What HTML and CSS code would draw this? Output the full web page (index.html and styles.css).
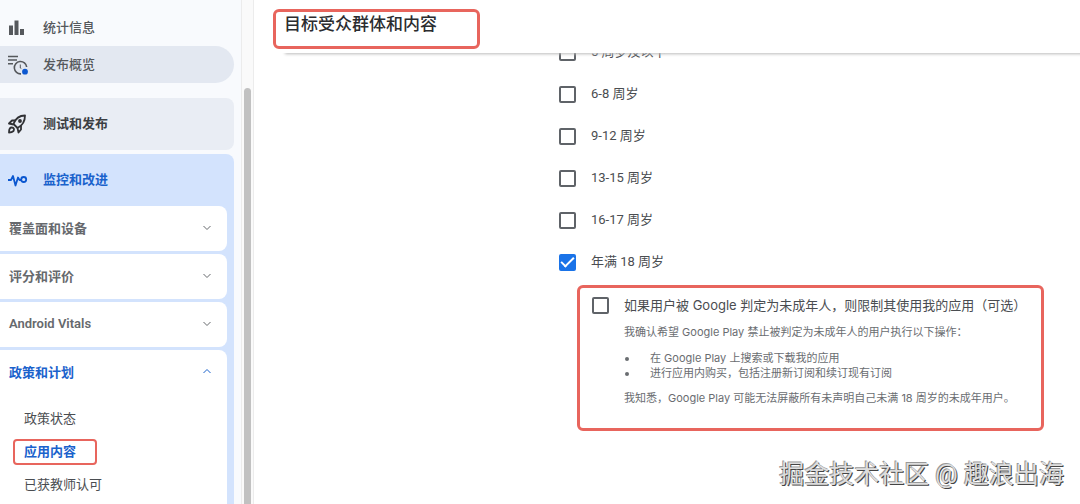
FILE: index.html
```html
<!DOCTYPE html>
<html lang="zh-CN">
<head>
<meta charset="utf-8">
<meta name="viewport" content="width=device-width, initial-scale=1">
<title>目标受众群体和内容</title>
<link rel="stylesheet" href="styles.css">
</head>
<body>
<div class="app">
  <aside class="sidebar">
    <nav class="nav">
      <a class="nav-item" href="#">
        <svg class="icon" viewBox="0 0 20 20"><path fill="#55585c" d="M1 7.500h4V17H1zM6.500 2.500h4V17h-4zM12 11h4v6h-4z"/></svg>
        <span>统计信息</span>
      </a>
      <a class="nav-item nav-item-current" href="#">
        <svg class="icon" viewBox="0 0 20 20" fill="none" stroke="#55585c" stroke-width="1.600"><path d="M0 1.500h10M0 5h9M0 8.800h5"/><path d="M18.700 12A6.200 6.200 0 1 0 13 18.900"/><path d="M12.300 9.500v3.500l1 .5" stroke-width="1"/><circle cx="17" cy="16.700" r="2.900" fill="#0b57d0" stroke="none"/></svg>
        <span>发布概览</span>
      </a>
      <a class="nav-section" href="#">
        <svg class="icon" viewBox="0 0 20 20" fill="none" stroke="#303134" stroke-width="1.800" stroke-linejoin="round"><path d="M5.500 10C7.500 4.500 11.500 1.500 17 1.500C17 7.500 14.500 11.500 9.500 14Z"/><path d="M7.500 6.500L4 6.500L1 9.500L5.500 10.500M13 12V15.500L10.500 18.500L9.500 14"/><circle cx="12" cy="7" r="1"/><path d="M1 18.500C1 15.500 1.500 13.500 3.800 13.500C6 13.500 6.500 15.500 5.500 17C4.500 18 3 18.500 1 18.500Z"/></svg>
        <span>测试和发布</span>
      </a>
      <div class="group">
        <a class="nav-section nav-section-active" href="#">
          <svg class="icon" viewBox="0 0 20 20" fill="none" stroke="#0b57d0" stroke-width="1.800" stroke-linecap="round" stroke-linejoin="round"><path d="M0 10h3l2-4l2.500 9.500L10 7.500l1.500 2.500h1.500"/><circle cx="15.700" cy="9.500" r="2.500"/></svg>
          <span>监控和改进</span>
        </a>
        <button class="card" type="button"><span>覆盖面和设备</span><svg class="chevron" viewBox="0 0 10 10"><path d="M1.500 3L5 6.500L8.500 3"/></svg></button>
        <button class="card" type="button"><span>评分和评价</span><svg class="chevron" viewBox="0 0 10 10"><path d="M1.500 3L5 6.500L8.500 3"/></svg></button>
        <button class="card" type="button"><span>Android Vitals</span><svg class="chevron" viewBox="0 0 10 10"><path d="M1.500 3L5 6.500L8.500 3"/></svg></button>
        <div class="open-card">
          <button class="card card-open" type="button"><span>政策和计划</span><svg class="chevron" viewBox="0 0 10 10"><path d="M1.500 6L5 2.500L8.500 6"/></svg></button>
          <div class="sub-list">
            <a class="sub-item" href="#">政策状态</a>
            <a class="sub-item sub-item-marked" href="#">应用内容</a>
            <a class="sub-item" href="#">已获教师认可</a>
          </div>
        </div>
      </div>
    </nav>
    <div class="scroll-track"><div class="scroll-thumb"></div></div>
  </aside>
  <main class="main">
    <header class="header"><h1 class="title">目标受众群体和内容</h1></header>
    <div class="content">
      <div class="ages">
        <label class="age"><input class="check" type="checkbox"><span>5 周岁及以下</span></label>
        <label class="age"><input class="check" type="checkbox"><span>6-8 周岁</span></label>
        <label class="age"><input class="check" type="checkbox"><span>9-12 周岁</span></label>
        <label class="age"><input class="check" type="checkbox"><span>13-15 周岁</span></label>
        <label class="age"><input class="check" type="checkbox"><span>16-17 周岁</span></label>
        <label class="age"><input class="check" type="checkbox" checked><span>年满 18 周岁</span></label>
      </div>
      <section class="restrict">
        <input class="check" type="checkbox" id="restrict">
        <div class="restrict-body">
          <label class="restrict-label" for="restrict">如果用户被 Google 判定为未成年人，则限制其使用我的应用（可选）</label>
          <p class="note">我确认希望 Google Play 禁止被判定为未成年人的用户执行以下操作：</p>
          <ul class="note-list">
            <li>在 Google Play 上搜索或下载我的应用</li>
            <li>进行应用内购买，包括注册新订阅和续订现有订阅</li>
          </ul>
          <p class="note">我知悉，Google Play 可能无法屏蔽所有未声明自己未满 18 周岁的未成年用户。</p>
        </div>
      </section>
    </div>
  </main>
  <div class="watermark">掘金技术社区 @ 趣浪出海</div>
</div>
</body>
</html>
```
FILE: styles.css
```css
* { box-sizing: border-box; }

body {
  margin: 0;
  font-family: Roboto, "Noto Sans CJK SC", sans-serif;
  font-size: 13px;
  line-height: 20px;
  color: #4a4d51;
  background: #fff;
}

a { color: inherit; text-decoration: none; }

.app {
  position: relative;
  display: flex;
  height: 100vh;
  overflow: hidden;
}

.sidebar {
  display: flex;
  flex: none;
  width: 254px;
  background: #f8fafd;
}

.nav {
  flex: 1;
  padding: 9px 7px 0 0;
}

.nav-item,
.nav-section {
  display: flex;
  align-items: center;
  gap: 15px;
  padding-left: 8px;
}

.nav-item {
  height: 37px;
  color: #55585c;
  font-weight: 500;
}

.nav-item-current {
  border-radius: 0 19px 19px 0;
  background: #e3e8f1;
}

.nav-section {
  height: 52px;
  margin-top: 15px;
  border-radius: 0 8px 8px 0;
  background: #e9edf4;
  color: #3c3f43;
  font-weight: 700;
}

.nav-section-active {
  margin-top: 0;
  background: none;
  color: #1a62cc;
}

.icon { width: 20px; height: 20px; }

.group {
  margin-top: 4px;
  padding-right: 7px;
  border-radius: 0 8px 0 0;
  background: #d3e3fd;
}

.card {
  display: flex;
  align-items: center;
  justify-content: space-between;
  width: 100%;
  height: 45px;
  margin: 0 0 3px;
  padding: 0 15px 2px 9px;
  border: 0;
  border-radius: 0 8px 8px 0;
  background: #fff;
  color: #66696d;
  font-family: Roboto, "Noto Sans CJK SC", sans-serif;
  font-size: 13px;
  font-weight: 600;
}

.chevron {
  width: 10px;
  height: 10px;
  fill: none;
  stroke: currentColor;
}

.open-card {
  height: 100vh;
  border-radius: 0 8px 0 0;
  background: #fff;
}

.card-open { background: none; color: #1a62cc; }

.sub-list {
  display: flex;
  flex-direction: column;
  align-items: flex-start;
  gap: 7px;
  padding: 8px 0 0 13px;
}

.sub-item {
  padding: 1px 9px;
  border: 2px solid transparent;
  border-radius: 4px;
}

.sub-item-marked {
  padding-right: 19px;
  border-color: #e8655d;
  color: #1a62cc;
  font-weight: 700;
}

.scroll-track {
  display: flex;
  width: 13px;
  padding: 88px 2px 0;
  border: solid #ececec;
  border-width: 0 1px;
  background: #fafafa;
}

.scroll-thumb {
  flex: 1;
  border-radius: 4px 4px 0 0;
  background: #c1c1c1;
}

.main {
  display: flex;
  flex: 1;
  flex-direction: column;
  min-width: 0;
}

.header {
  z-index: 1;
  height: 53px;
  margin-left: 19px;
  padding-top: 9px;
  background: #fff;
  box-shadow: 12px 1px 3px #bbb;
}

.title {
  width: 207px;
  height: 40px;
  margin: 0;
  padding: 1px 8px;
  border: 3px solid #e8655d;
  border-radius: 6px;
  color: #2b2c2f;
  font-size: 17px;
  font-weight: 500;
  line-height: 22px;
}

.content {
  margin-top: -22px;
  padding: 0 36px 0 305px;
}

.ages { display: grid; }

.age {
  display: flex;
  align-items: center;
  gap: 15px;
  height: 42px;
}

.check {
  flex: none;
  width: 17px;
  height: 17px;
  margin: 0;
  border: 2px solid #5f6368;
  border-radius: 2px;
  background: #fff;
  appearance: none;
}

.check:checked {
  display: grid;
  place-items: center;
  border-color: #1a73e8;
  background: #1a73e8;
}

.check:checked::before {
  content: "";
  width: 11px;
  height: 5px;
  margin-bottom: 3px;
  border: solid #fff;
  border-width: 0 0 2px 2px;
  rotate: -45deg;
}

.restrict {
  display: flex;
  gap: 15px;
  min-height: 146px;
  margin: 2px 0 0 18px;
  padding: 7px 12px;
  border: 3px solid #e8655d;
  border-radius: 6px;
}

.restrict .check { margin-top: 2px; }

.restrict-body {
  color: #6a6d71;
  font-family: Inter, "Noto Sans CJK SC", sans-serif;
  font-size: 11px;
  line-height: 15px;
  white-space: nowrap;
}

.restrict-label {
  display: block;
  color: #4a4d51;
  font-size: 13px;
  line-height: 20px;
}

.note { margin: 10px 0 11px; }

.note-list {
  margin: 0;
  padding: 0;
  list-style: none;
}

.note-list li {
  display: flex;
  align-items: center;
  gap: 21px;
}

.note-list li::before {
  content: "";
  width: 4px;
  height: 4px;
  margin-left: 1px;
  border-radius: 50%;
  background: #6a6d71;
}

.watermark {
  position: absolute;
  right: 16px;
  bottom: 11px;
  color: #ddd;
  font-size: 25px;
  line-height: 36px;
  text-shadow: 1px 1px 0 #444, -1px -1px 0 #999;
}
```
